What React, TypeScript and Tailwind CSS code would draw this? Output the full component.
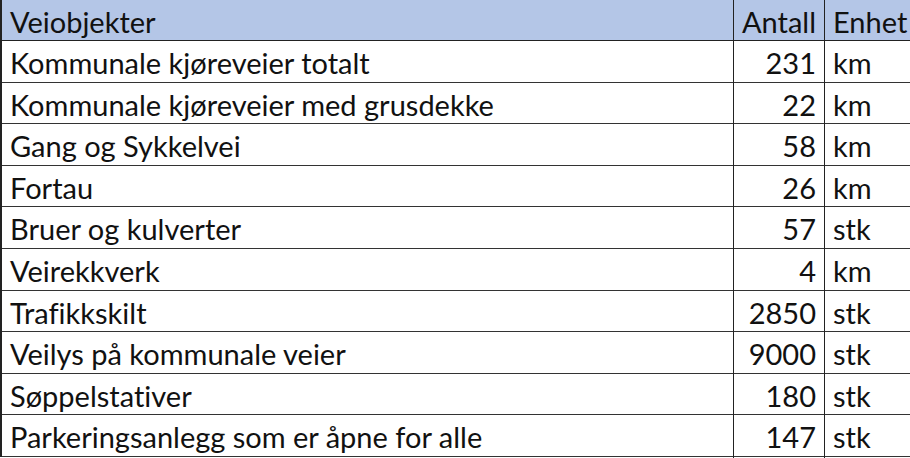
const rows: [string, string, string][] = [
  ['Kommunale kjøreveier totalt', '231', 'km'],
  ['Kommunale kjøreveier med grusdekke', '22', 'km'],
  ['Gang og Sykkelvei', '58', 'km'],
  ['Fortau', '26', 'km'],
  ['Bruer og kulverter', '57', 'stk'],
  ['Veirekkverk', '4', 'km'],
  ['Trafikkskilt', '2850', 'stk'],
  ['Veilys på kommunale veier', '9000', 'stk'],
  ['Søppelstativer', '180', 'stk'],
  ['Parkeringsanlegg som er åpne for alle', '147', 'stk'],
];

export default function App() {
  return (
    <div className="w-[910px] h-[458px] overflow-hidden bg-white font-['Lato','Noto_Sans',sans-serif] text-[29px] text-[#111] [font-variant-ligatures:none]">
      <div className="w-[912px] border-l-2 border-[#222]">
        <div className="grid grid-cols-[732px_91px_1fr] h-[41px] bg-[#b4c6e7] border-b border-[#222]">
          <div className="pl-2 flex items-center border-r border-[#222]">Veiobjekter</div>
          <div className="pr-2 flex items-center justify-end border-r border-[#222]">Antall</div>
          <div className="pl-2 flex items-center">Enhet</div>
        </div>
        {rows.map(([name, count, unit]) => (
          <div key={name} className="grid grid-cols-[732px_91px_1fr] h-[41.6px] border-b border-[#333]">
            <div className="pl-2 flex items-center border-r border-[#222]">{name}</div>
            <div className="pr-2 flex items-center justify-end border-r border-[#222]">{count}</div>
            <div className="pl-2 flex items-center">{unit}</div>
          </div>
        ))}
      </div>
    </div>
  );
}
